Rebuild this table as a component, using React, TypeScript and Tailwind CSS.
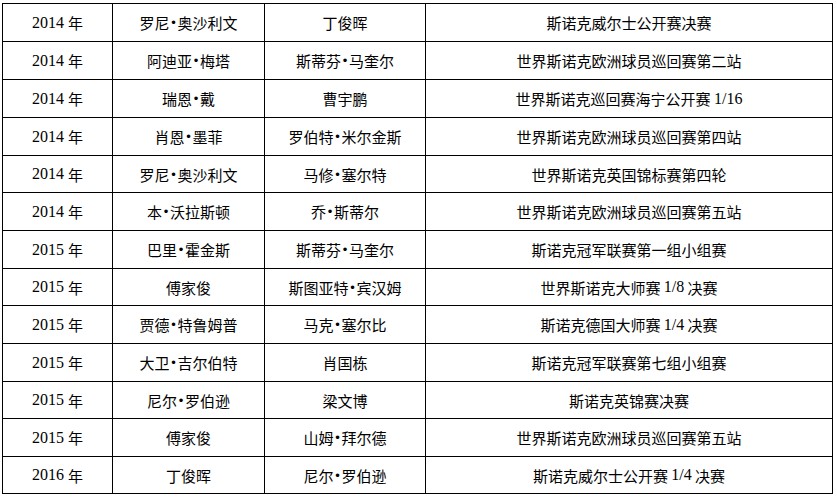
import React from "react";

const rows: [string, string, string, string][] = [
  ["2014", "罗尼•奥沙利文", "丁俊晖", "斯诺克威尔士公开赛决赛"],
  ["2014", "阿迪亚•梅塔", "斯蒂芬•马奎尔", "世界斯诺克欧洲球员巡回赛第二站"],
  ["2014", "瑞恩•戴", "曹宇鹏", "世界斯诺克巡回赛海宁公开赛 1/16"],
  ["2014", "肖恩•墨菲", "罗伯特•米尔金斯", "世界斯诺克欧洲球员巡回赛第四站"],
  ["2014", "罗尼•奥沙利文", "马修•塞尔特", "世界斯诺克英国锦标赛第四轮"],
  ["2014", "本•沃拉斯顿", "乔•斯蒂尔", "世界斯诺克欧洲球员巡回赛第五站"],
  ["2015", "巴里•霍金斯", "斯蒂芬•马奎尔", "斯诺克冠军联赛第一组小组赛"],
  ["2015", "傅家俊", "斯图亚特•宾汉姆", "世界斯诺克大师赛 1/8 决赛"],
  ["2015", "贾德•特鲁姆普", "马克•塞尔比", "斯诺克德国大师赛 1/4 决赛"],
  ["2015", "大卫•吉尔伯特", "肖国栋", "斯诺克冠军联赛第七组小组赛"],
  ["2015", "尼尔•罗伯逊", "梁文博", "斯诺克英锦赛决赛"],
  ["2015", "傅家俊", "山姆•拜尔德", "世界斯诺克欧洲球员巡回赛第五站"],
  ["2016", "丁俊晖", "尼尔•罗伯逊", "斯诺克威尔士公开赛 1/4 决赛"],
];

const heights = ["h-[38px]", "h-[38px]", "h-[38px]", "h-[38px]", "h-[37px]", "h-[38px]", "h-[38px]", "h-[37px]", "h-[38px]", "h-[38px]", "h-[37px]", "h-[38px]", "h-[37px]"];

function Mixed({ text }: { text: string }) {
  const parts = text.split(/([0-9/]+|•)/);
  return (
    <>
      {parts.map((p, i) =>
        p === "•" ? (
          <span key={i} className="inline-block w-[8px] text-center font-['Liberation_Sans',sans-serif] text-[13px]">•</span>
        ) : /^[0-9/]+$/.test(p) ? (
          <span key={i} className="font-['Liberation_Serif',serif] text-[16px]">{p}</span>
        ) : (
          <span key={i}>{p}</span>
        )
      )}
    </>
  );
}

const cell = "border-r border-b border-black flex items-center justify-center leading-none whitespace-pre";

export default function App() {
  return (
    <div className="w-[837px] h-[498px] bg-white pt-[3px] pl-[2px] text-black text-[15px] font-['Noto_Sans_CJK_SC',sans-serif]">
      <div className="w-[831px] border-l border-t border-black">
        {rows.map((r, i) => (
          <div key={i} className={`grid grid-cols-[110px_152px_161px_407px] ${heights[i]}`}>
            <div className={cell}>
              <span className="font-['Liberation_Serif',serif] text-[16px]">{r[0]}</span>
              <span className="ml-[4px]">年</span>
            </div>
            <div className={cell}><Mixed text={r[1]} /></div>
            <div className={cell}><Mixed text={r[2]} /></div>
            <div className={cell}><Mixed text={r[3]} /></div>
          </div>
        ))}
      </div>
    </div>
  );
}
